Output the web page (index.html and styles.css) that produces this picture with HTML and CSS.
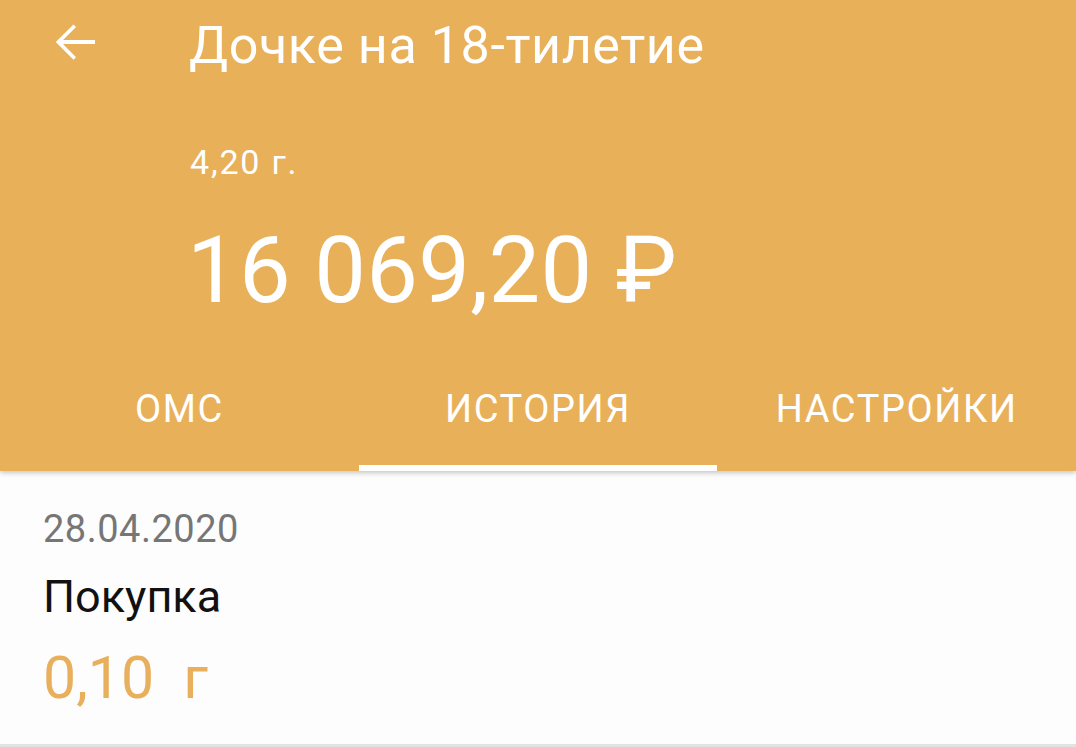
FILE: index.html
```html
<!DOCTYPE html>
<html lang="ru">
<head>
<meta charset="utf-8">
<link rel="stylesheet" href="styles.css">
</head>
<body>
<header class="header">
  <div class="toolbar">
    <span class="back">
      <svg viewBox="0 0 24 24" width="60" height="60"><path fill="#fff" d="M20 11.2H7.2l5.2-5.2-1-1L4.3 12l7.1 7.1 1-1-5.2-5.3H20z"/></svg>
    </span>
    <h1 class="title">Дочке на 18-тилетие</h1>
  </div>
  <div class="balance">
    <div class="grams">4,20 г.</div>
    <div class="amount">16 069,20 ₽</div>
  </div>
  <nav class="tabs">
    <div class="tab">ОМС</div>
    <div class="tab active">ИСТОРИЯ</div>
    <div class="tab">НАСТРОЙКИ</div>
  </nav>
</header>
<main class="list">
  <div class="item">
    <div class="date">28.04.2020</div>
    <div class="op">Покупка</div>
    <div class="qty">0,10&nbsp; г</div>
  </div>
</main>
</body>
</html>
```
FILE: styles.css
```css
* { box-sizing: border-box; }
html, body { margin: 0; padding: 0; }
body {
  font-family: Roboto, "Noto Sans", sans-serif;
  background: #fdfdfd;
  width: 1076px;
  height: 747px;
  overflow: hidden;
}
.header {
  background: #e9b05a;
  color: #fff;
  box-shadow: 0 2px 5px rgba(0,0,0,0.22);
  position: relative;
}
.toolbar {
  display: flex;
  align-items: center;
  height: 92px;
}
.back {
  display: flex;
  padding-left: 45px;
  width: 189px;
  margin-top: -8px;
}
.title {
  margin: 0;
  font-weight: 400;
  font-size: 52px;
  line-height: 56px;
  letter-spacing: 0.6px;
}
.balance {
  padding-left: 190px;
  padding-top: 52px;
}
.grams {
  font-size: 34px;
  line-height: 36px;
  letter-spacing: 1.8px;
}
.amount {
  margin-top: 41px;
  font-size: 92px;
  line-height: 100px;
  margin-left: -3px;
  letter-spacing: 0.3px;
}
.tabs {
  display: grid;
  grid-template-columns: 1fr 1fr 1fr;
  margin-top: 26px;
}
.tab {
  height: 124px;
  display: flex;
  align-items: center;
  justify-content: center;
  font-size: 38px;
  font-weight: 400;
  letter-spacing: 1.6px;
  border-bottom: 6px solid transparent;
  padding-top: 6px;
}
.tab.active { border-bottom-color: #fff; }
.list { background: #fdfdfd; }
.item {
  padding: 36px 0 34px 43px;
  border-bottom: 3px solid #e2e2e2;
}
.date {
  color: #767676;
  font-size: 38px;
  line-height: 44px;
  letter-spacing: 0.5px;
}
.op {
  margin-top: 21px;
  color: #111;
  font-size: 45px;
  line-height: 50px;
}
.qty {
  margin-top: 24px;
  color: #e8b05c;
  font-size: 59px;
  line-height: 64px;
}
```
